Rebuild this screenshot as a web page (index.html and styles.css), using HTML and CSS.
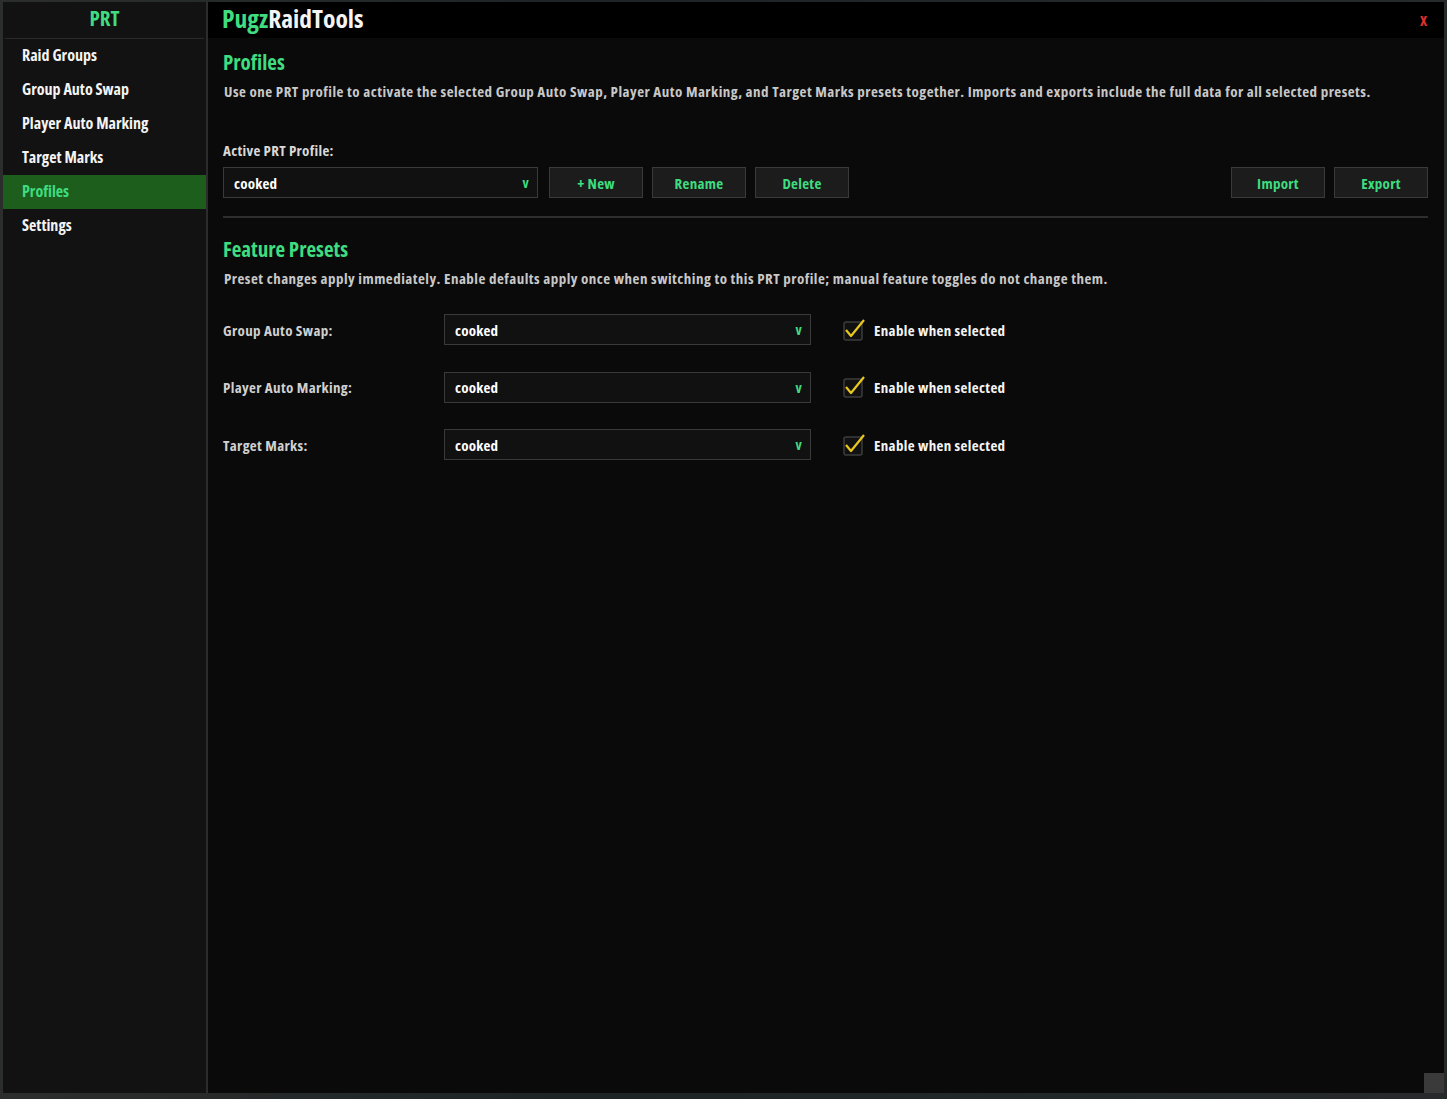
FILE: index.html
```html
<!DOCTYPE html>
<html lang="en">
<head>
  <meta charset="UTF-8" />
  <title>PugzRaidTools | Profiles</title>
  <link rel="stylesheet" href="styles.css">
</head>
<body>

  <div class="frame">
    <nav class="sidebar">
      <div class="brand">PRT</div>
      <ul class="nav">
        <li>Raid Groups</li>
        <li>Group Auto Swap</li>
        <li>Player Auto Marking</li>
        <li>Target Marks</li>
        <li class="active">Profiles</li>
        <li>Settings</li>
      </ul>
    </nav>

    <main class="panel">
      <header class="titlebar">
        <h1><span class="green">Pugz</span>RaidTools</h1>
        <span class="close">X</span>
      </header>

      <section class="content">
        <h2>Profiles</h2>
        <p class="desc">Use one PRT profile to activate the selected Group Auto Swap, Player Auto Marking, and Target Marks presets together. Imports and exports include the full data for all selected presets.</p>

        <label class="field-label">Active PRT Profile:</label>
        <div class="toolbar">
          <div class="select profile-select"><span>cooked</span><span class="arrow">v</span></div>
          <button>+ New</button>
          <button>Rename</button>
          <button>Delete</button>
          <div class="spacer"></div>
          <button>Import</button>
          <button>Export</button>
        </div>

        <hr class="divider">

        <h2>Feature Presets</h2>
        <p class="desc">Preset changes apply immediately. Enable defaults apply once when switching to this PRT profile; manual feature toggles do not change them.</p>

        <div class="presets">
          <div class="preset-row">
            <span class="preset-label">Group Auto Swap:</span>
            <div class="select"><span>cooked</span><span class="arrow">v</span></div>
            <span class="check"><svg viewBox="0 0 24 24" width="24" height="24"><rect x="2" y="4" width="18" height="18" rx="2" fill="#111" stroke="#3c3c3c" stroke-width="1.5"/><path d="M4 12 L9 18 L22 2" fill="none" stroke="#e8c820" stroke-width="2.2" stroke-linejoin="round"/></svg></span>
            <span class="check-text">Enable when selected</span>
          </div>
          <div class="preset-row">
            <span class="preset-label">Player Auto Marking:</span>
            <div class="select"><span>cooked</span><span class="arrow">v</span></div>
            <span class="check"><svg viewBox="0 0 24 24" width="24" height="24"><rect x="2" y="4" width="18" height="18" rx="2" fill="#111" stroke="#3c3c3c" stroke-width="1.5"/><path d="M4 12 L9 18 L22 2" fill="none" stroke="#e8c820" stroke-width="2.2" stroke-linejoin="round"/></svg></span>
            <span class="check-text">Enable when selected</span>
          </div>
          <div class="preset-row">
            <span class="preset-label">Target Marks:</span>
            <div class="select"><span>cooked</span><span class="arrow">v</span></div>
            <span class="check"><svg viewBox="0 0 24 24" width="24" height="24"><rect x="2" y="4" width="18" height="18" rx="2" fill="#111" stroke="#3c3c3c" stroke-width="1.5"/><path d="M4 12 L9 18 L22 2" fill="none" stroke="#e8c820" stroke-width="2.2" stroke-linejoin="round"/></svg></span>
            <span class="check-text">Enable when selected</span>
          </div>
        </div>
      </section>

      <div class="grip"></div>
    </main>
  </div>

</body>
</html>
```

FILE: styles.css
```css
body {
  margin: 0;
  height: 1099px;
  overflow: hidden;
  background: linear-gradient(90deg, #2b2e2c, #1e2426 40%, #262a2b);
  font-family: 'Open Sans', sans-serif;
  font-stretch: condensed;
  font-weight: bold;
  color: #f0f0f0;
}

.frame {
  display: flex;
  height: 1091px;
  margin: 2px 3px 0 3px;
}

.sidebar {
  width: 203px;
  background-color: #121212;
  border-right: 2px solid #2c2c2c;
}

.brand {
  height: 36px;
  line-height: 33px;
  text-align: center;
  color: #3fdc80;
  font-size: 21px;
  border-bottom: 1px solid #2a2a2a;
  margin: 0 2px 0 2px;
}

.nav {
  list-style: none;
  margin: 0;
  padding: 0;
}

.nav li {
  height: 34px;
  line-height: 32px;
  padding-left: 19px;
  font-size: 16px;
  color: #f4f4f4;
}

.nav li.active {
  background-color: #1d5e1d;
  color: #3fdc80;
}

.panel {
  flex: 1;
  background-color: #0a0a0a;
  display: flex;
  flex-direction: column;
  position: relative;
}

.titlebar {
  box-sizing: border-box;
  height: 36px;
  background-color: #000;
  display: flex;
  align-items: center;
  justify-content: space-between;
  padding: 0 17px 4px 14px;
}

.titlebar h1 {
  margin: 0;
  font-size: 25.5px;
  color: #f4f4f4;
}

.green {
  color: #3fdc80;
}

.close {
  color: #e03030;
  font-size: 15px;
  padding-top: 3px;
}

.content {
  padding: 11px 16px 0 15px;
}

h2 {
  margin: 0;
  font-size: 21px;
  color: #3fdc80;
  line-height: 26px;
}

.desc {
  margin: 6px 0 0 1px;
  font-size: 15px;
  color: #c8c8c8;
  letter-spacing: 0.48px;
  line-height: 20px;
}

.field-label {
  display: block;
  margin-top: 39px;
  font-size: 15px;
  color: #d8d8d8;
  line-height: 20px;
  letter-spacing: 0.3px;
}

.toolbar {
  display: flex;
  gap: 9px;
  margin-top: 7px;
  align-items: center;
}

.spacer {
  flex: 1;
}

.select {
  box-sizing: border-box;
  height: 31px;
  background-color: #111;
  border: 1px solid #3a3a3a;
  display: flex;
  justify-content: space-between;
  align-items: center;
  padding: 0 8px 0 10px;
  font-size: 15px;
  color: #fff;
  letter-spacing: 0.2px;
}

.profile-select {
  width: 315px;
  margin-right: 2px;
}

.arrow {
  color: #3fdc80;
  font-size: 14px;
}

button {
  box-sizing: border-box;
  width: 94px;
  height: 31px;
  background-color: #1c1c1c;
  border: 1px solid #3a3a3a;
  color: #3fdc80;
  font-family: inherit;
  font-stretch: condensed;
  font-weight: bold;
  font-size: 15px;
  letter-spacing: 0.3px;
  padding: 0;
}

.divider {
  border: none;
  border-top: 2px solid #2e2e2e;
  margin: 18px 0 0 0;
}

.divider + h2 {
  margin-top: 18px;
}

.presets {
  margin-top: 26px;
  display: flex;
  flex-direction: column;
  gap: 26.5px;
}

.preset-row {
  display: flex;
  align-items: center;
}

.preset-label {
  width: 221px;
  font-size: 15px;
  color: #d0d0d0;
  letter-spacing: 0.35px;
}

.preset-row .select {
  width: 367px;
}

.check {
  margin-left: 31px;
  width: 24px;
  height: 24px;
}

.check-text {
  margin-left: 8px;
  font-size: 15px;
  color: #f4f4f4;
  letter-spacing: 0.35px;
}

.grip {
  position: absolute;
  right: 0;
  bottom: 0;
  width: 20px;
  height: 20px;
  background-color: #3a3a3a;
}
```
